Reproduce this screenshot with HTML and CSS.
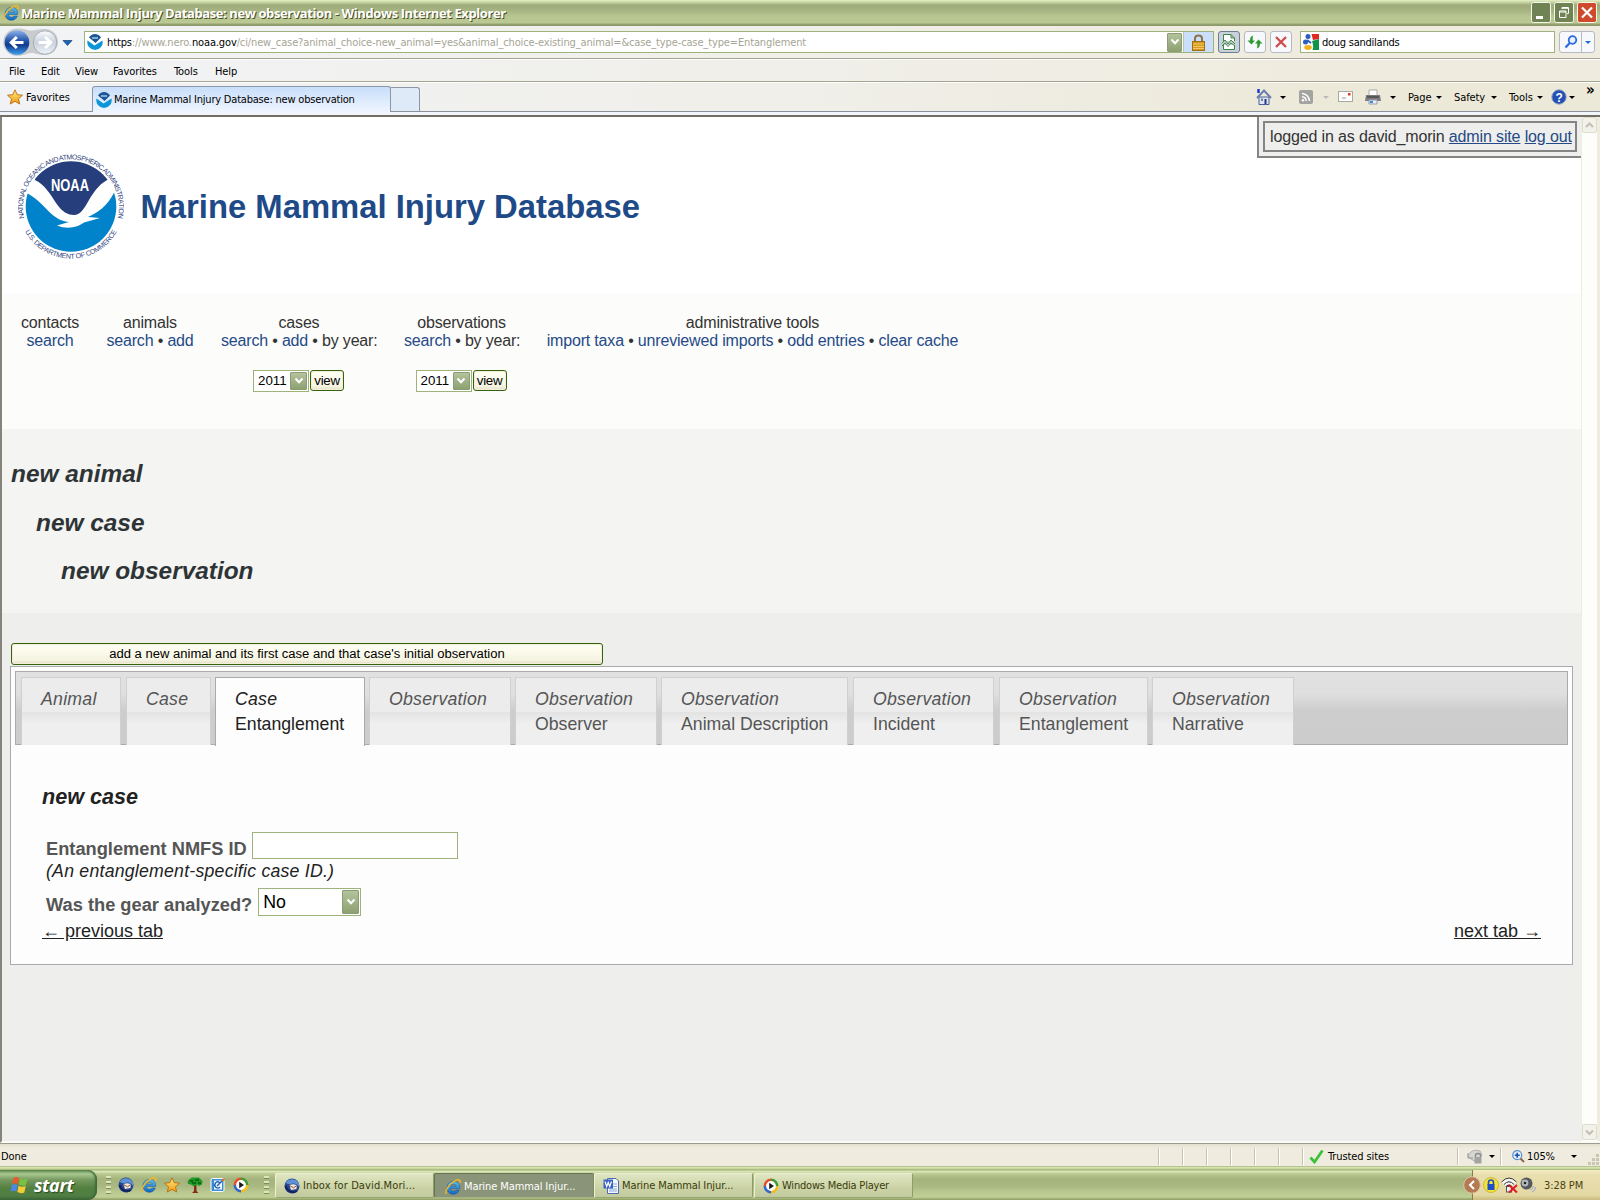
FILE: index.html
```html
<!DOCTYPE html>
<html lang="en">
<head>
<meta charset="utf-8">
<title>Marine Mammal Injury Database: new observation</title>
<link rel="stylesheet" href="styles.css">
</head>
<body>
<svg class="defs" width="0" height="0">
  <defs>
    <linearGradient id="gBlue" x1="0" y1="0" x2="0" y2="1"><stop offset="0" stop-color="#8fb4ea"/><stop offset=".45" stop-color="#1f50a8"/><stop offset=".6" stop-color="#123a8c"/><stop offset="1" stop-color="#3fa0ee"/></linearGradient>
    <linearGradient id="gGrey" x1="0" y1="0" x2="0" y2="1"><stop offset="0" stop-color="#fbfcfe"/><stop offset=".5" stop-color="#c9d1dc"/><stop offset="1" stop-color="#eef3f8"/></linearGradient>
    <linearGradient id="gStar" x1="0" y1="0" x2="0" y2="1"><stop offset="0" stop-color="#ffee80"/><stop offset="1" stop-color="#f09a10"/></linearGradient>
    <linearGradient id="gIe" x1="0" y1="0" x2="0" y2="1"><stop offset="0" stop-color="#5cc3f6"/><stop offset="1" stop-color="#1267c4"/></linearGradient>
    <symbol id="ie" viewBox="0 0 16 16">
      <path d="M14.600 9.400H5.400C5.600 11.200 6.800 12.200 8.600 12.200c1.200 0 2-.4 2.500-1.200h3.200C13.500 13.700 11.400 15.200 8.500 15.200 4.600 15.200 2 12.600 2 8.900s2.600-6.400 6.500-6.400c4 0 6.500 2.700 6.100 6.900zM11.300 7.200C11 5.900 10 5.100 8.400 5.100S5.700 5.900 5.400 7.200z" fill="url(#gIe)" stroke="#0c4c9c" stroke-width=".5"/>
      <path d="M1.400 15C-.8 12.500 4 5.500 9.500 2.200 13.500-.2 16 .8 14.900 4" fill="none" stroke="#f2b724" stroke-width="1.500"/>
    </symbol>
    <symbol id="noaa-mini" viewBox="0 0 16 16">
      <path d="M2 3.500A7 7 0 0 1 14 3.500L8.600 9Z" fill="#1a5797"/>
      <path d="M.5 6.500 7.500 11.500 15.500 6.500A7.700 7.700 0 1 1 .5 6.500Z" fill="#0c96d8"/>
      <path d="M5 4h6" stroke="#cfe2f4" stroke-width="1.200"/>
    </symbol>
    <symbol id="star" viewBox="0 0 16 16"><path d="M8 .8 10.200 5.700 15.500 6.200 11.500 9.800 12.700 15 8 12.300 3.300 15 4.500 9.800.5 6.200 5.800 5.700Z" fill="url(#gStar)" stroke="#b86b10" stroke-width=".9"/></symbol>
    <symbol id="bird" viewBox="0 0 16 16">
      <circle cx="8" cy="8" r="7.500" fill="#27478e"/><path d="M1.500 5C4 .5 10 0 13.500 3.500 15 5 15.500 7 15 9 13.500 5.500 9 4.500 6 6.500Z" fill="#5f92d4"/>
      <path d="M5.500 7.200Q9 5.500 12.800 7.200L12.500 11 7 12Z" fill="#f1e8da"/><path d="M5.500 7.500 9.500 9.800 12.800 7.500" fill="none" stroke="#8b5a48"/><path d="M1.500 8C3.500 14 9 15.500 13 13" fill="none" stroke="#15235c" stroke-width="2"/>
    </symbol>
    <symbol id="wmp" viewBox="0 0 16 16">
      <circle cx="8" cy="8" r="6.200" fill="#fff"/>
      <g fill="none" stroke-width="2.600"><path d="M8 1.800A6.200 6.200 0 0 0 1.800 8" stroke="#e8502c"/><path d="M8 1.800A6.200 6.200 0 0 1 14.200 8" stroke="#3a9e34"/><path d="M14.200 8A6.200 6.200 0 0 1 8 14.200" stroke="#f2bc1e"/><path d="M1.800 8A6.200 6.200 0 0 0 8 14.200" stroke="#3468cc"/></g>
      <path d="M6.200 4.800 11 8 6.200 11.200Z" fill="#1a1a1a"/>
    </symbol>
    <symbol id="chev" viewBox="0 0 10 8"><path d="M1.500 1.500 5 5.200 8.500 1.500" fill="none" stroke="#fff" stroke-width="2"/></symbol>
  </defs>
</svg>

<div class="window">
  <div class="titlebar">
    <svg class="ic16" viewBox="0 0 16 16"><use href="#ie"/></svg>
    <span class="titletext">Marine Mammal Injury Database: new observation - Windows Internet Explorer</span>
    <div class="winbtns">
      <svg width="20" height="21"><rect x=".5" y=".5" width="19" height="20" rx="2" fill="#6f8355" stroke="#f6f8ea"/><rect x="5" y="14" width="7" height="3" fill="#fff"/></svg>
      <svg width="20" height="21"><rect x=".5" y=".5" width="19" height="20" rx="2" fill="#6f8355" stroke="#f6f8ea"/><path d="M8 7V5.500H14.500V11.500H13M5.500 9H12V15.500H5.500ZM5.500 10H12M8 6.300H14" fill="none" stroke="#fff"/></svg>
      <svg width="20" height="21"><rect x=".5" y=".5" width="19" height="20" rx="2" fill="#cf4a2c" stroke="#f6f8ea"/><path d="M5 5.500 15 15.500M15 5.500 5 15.500" stroke="#fff" stroke-width="2.200"/></svg>
    </div>
  </div>

  <div class="navrow">
    <svg class="backfwd" width="75" height="30" viewBox="0 0 75 30">
      <path d="M17 1.500C24 1 27 3.500 31 3.500S38 2 45 2A13 13 0 0 1 45 28C38 28 35 26 31 26S24 29 17 29A13.500 13.500 0 0 1 17 1.500Z" fill="#c9cbcd"/>
      <circle cx="17" cy="15.500" r="12.300" fill="url(#gBlue)"/><circle cx="45" cy="15.500" r="11.700" fill="url(#gGrey)" stroke="#9aa3ae" stroke-width=".8"/>
      <path d="M23.500 15.500H12M16.800 10 11.200 15.500 16.800 21" fill="none" stroke="#fff" stroke-width="3"/>
      <path d="M38.500 15.500H50M45.200 10 50.800 15.500 45.200 21" fill="none" stroke="#fff" stroke-width="3"/>
      <path d="M63 13.500H72L67.500 18.500Z" fill="#1a66b4" stroke="#123c78" stroke-width=".7"/>
    </svg>
    <div class="address">
      <svg class="ic16" viewBox="0 0 16 16"><use href="#noaa-mini"/></svg>
      <span class="url"><b>https</b>://www.nero.<b>noaa.gov</b>/ci/new_case?animal_choice-new_animal=yes&amp;animal_choice-existing_animal=&amp;case_type-case_type=Entanglement</span>
      <span class="dd addr-dd"><svg width="10" height="8"><use href="#chev"/></svg></span>
      <span class="lockbox"><svg width="15" height="17" viewBox="0 0 15 17"><path d="M4 8V4.500Q4 1.500 7.500 1.500T11 4.500V8" fill="none" stroke="#8a744e" stroke-width="2"/><rect x="1.500" y="7.500" width="12" height="9" fill="#d69a22" stroke="#a06f14"/><path d="M2 10H13M2 12.500H13M2 14.500H13" stroke="#f1c863"/></svg></span>
    </div>
    <div class="navbtn pressed"><svg width="16" height="18" viewBox="0 0 16 18"><path d="M2.500 8V1.500H10L13.500 5V8M2.500 12V16.500H13.500V12M10 1.500V5H13.500" fill="#fff" stroke="#3c8a42"/><path d="M1 10.500 4 7 7 11 10 7 14 11M1 13 4 10 7 13.500 10 10 14 13" fill="none" stroke="#3c8a42"/></svg></div>
    <div class="navbtn"><svg width="16" height="16" viewBox="0 0 16 16"><path d="M6 1.500Q2.800 2.500 3 6.500H.5L4.500 10.500 8 6.500H5.800Q5.500 3.500 6 1.500Z" fill="#2f9a2f"/><path d="M10 14.500Q13.200 13.500 13 9.500H15.500L11.500 5.500 8 9.500H10.200Q10.500 12.500 10 14.500Z" fill="#2f9a2f"/></svg></div>
    <div class="navbtn"><svg width="14" height="14"><path d="M2 2 12 12M12 2 2 12" stroke="#cf4c4c" stroke-width="2.300"/></svg></div>
    <div class="search">
      <svg width="16" height="16"><rect width="16" height="16" fill="#fff"/><circle cx="5" cy="2.500" r="2.500" fill="#2b5fbe"/><circle cx="2.500" cy="8" r="2.500" fill="#2b5fbe"/><path d="M4 6 8 9" stroke="#2b5fbe" stroke-width="2"/><path d="M8.500 0H16V5L10 6Z" fill="#e02a20"/><path d="M9 7 16 5V16H9.500Q11 12 9 7Z" fill="#109448"/><ellipse cx="5" cy="13.500" rx="3.800" ry="2.400" fill="#f2b31c"/></svg>
      <span class="searchtext">doug sandilands</span>
    </div>
    <div class="go"><span><svg width="14" height="14" viewBox="0 0 14 14"><circle cx="8.500" cy="5" r="3.800" fill="#e8f1ff" stroke="#2a6ae0" stroke-width="1.800"/><path d="M5.700 8 1.500 12.500" stroke="#2a6ae0" stroke-width="2.200"/></svg></span><span><i class="arr blue"></i></span></div>
  </div>

  <div class="menurow"><span>File</span><span>Edit</span><span>View</span><span>Favorites</span><span>Tools</span><span>Help</span></div>

  <div class="tabrow">
    <div class="fav"><svg class="ic16" viewBox="0 0 16 16"><use href="#star"/></svg><span>Favorites</span></div>
    <div class="browsertab"><svg class="ic16" viewBox="0 0 16 16"><use href="#noaa-mini"/></svg><span>Marine Mammal Injury Database: new observation</span></div>
    <div class="newtab"></div>
    <div class="cmdbar">
      <svg class="c-home" width="16" height="16"><path d="M3 8H13V15.500H3Z" fill="#dfe6f4" stroke="#4a5f94"/><path d="M1 9 8 1.500 15 9" fill="none" stroke="#6b7fae" stroke-width="2"/><path d="M2.500 0V4" stroke="#2438c8" stroke-width="2.500"/><path d="M9.500 10V15" stroke="#23367c" stroke-width="2"/><path d="M5 9.500H7V12H5Z" fill="#6f7f9a"/></svg>
      <i class="arr a1"></i>
      <svg class="c-rss" width="14" height="14"><rect width="14" height="14" rx="2" fill="#a3a3a0"/><g fill="none" stroke="#fff" stroke-width="1.500"><path d="M3 3.500A8 8 0 0 1 10.500 11M3 6.800A4.500 4.500 0 0 1 7.200 11"/></g><circle cx="4" cy="10.300" r="1.200" fill="#fff"/></svg>
      <i class="arr a2"></i>
      <svg class="c-mail" width="15" height="12"><rect x=".5" y=".5" width="14" height="10" fill="#fcfcfa" stroke="#a9a9a4"/><path d="M10 2H12.500V4.500H10Z" fill="#d83a2c"/><path d="M4 7H8" stroke="#999"/></svg>
      <svg class="c-print" width="16" height="16"><path d="M4 6V1H12V6" fill="#fff" stroke="#aaa"/><path d="M1 6H15L16 12H0Z" fill="#7c7c7e"/><path d="M2 8H14" stroke="#333"/><path d="M4 11H12V15H4Z" fill="#eef" stroke="#99a"/><path d="M5 13H8" stroke="#3090d0" stroke-width="2"/></svg>
      <i class="arr a3"></i>
      <span class="w-page">Page</span><i class="arr a4"></i>
      <span class="w-safety">Safety</span><i class="arr a5"></i>
      <span class="w-tools">Tools</span><i class="arr a6"></i>
      <svg class="c-help" width="16" height="16"><circle cx="8" cy="8" r="7.200" fill="#2450b4" stroke="#8fa3c8"/><text x="8" y="12.500" class="helpq">?</text></svg>
      <i class="arr a7"></i><span class="more">»</span>
    </div>
  </div>
  <div class="tabline"></div>

  <div class="view">
    <div class="page">
      <div class="login"><div>logged in as david_morin <a>admin site</a> <a>log out</a></div></div>
      <header class="banner">
        <svg class="seal" width="106" height="106" viewBox="0 0 106 106">
          <defs>
            <path id="ringTop" d="M7.600 70A48 48 0 1 1 98.400 70"/>
            <path id="ringBot" d="M4.500 73A52.300 52.300 0 0 0 101.500 73"/>
            <clipPath id="disc"><circle cx="53" cy="53.500" r="45.300"/></clipPath>
          </defs>
          <g clip-path="url(#disc)">
            <rect width="106" height="106" fill="#fff"/>
            <path d="M17 27C27 32 33 42 38 50 44 59 50 62 56 62S66 56 71 47C77 37 83 29 92 26V0H17Z" fill="#263f7c"/>
            <path d="M7 39C18 44 27 55 33 60.500 39 66 45 68.500 51 69L39 72.500C50 77 60 74 66 69.500L82 65 70 64C84 58 93 48 97.500 36L106 40V106H0V38Z" fill="#0083ca"/>
          </g>
          <text x="33" y="38" class="sealname" textLength="38" lengthAdjust="spacingAndGlyphs">NOAA</text>
          <text class="ring"><textPath href="#ringTop" startOffset="50%" textLength="172" lengthAdjust="spacing">NATIONAL OCEANIC AND ATMOSPHERIC ADMINISTRATION</textPath></text>
          <text class="ring"><textPath href="#ringBot" startOffset="50%" textLength="112" lengthAdjust="spacing">U.S. DEPARTMENT OF COMMERCE</textPath></text>
        </svg>
        <h1>Marine Mammal Injury Database</h1>
      </header>

      <nav class="sitenav">
        <div class="k1">contacts<br><a>search</a></div>
        <div class="k2">animals<br><a>search</a> • <a>add</a></div>
        <div class="k3">cases<br><a>search</a> • <a>add</a> • by year:
          <div class="yr"><span class="sel">2011<span class="dd"><svg width="10" height="8"><use href="#chev"/></svg></span></span><span class="btn">view</span></div></div>
        <div class="k4">observations<br><a>search</a> • by year:
          <div class="yr"><span class="sel">2011<span class="dd"><svg width="10" height="8"><use href="#chev"/></svg></span></span><span class="btn">view</span></div></div>
        <div class="k5">administrative tools<br><a>import taxa</a> • <a>unreviewed imports</a> • <a>odd entries</a> • <a>clear cache</a></div>
      </nav>

      <section class="crumbs"><h2>new animal</h2><h2 class="in1">new case</h2><h2 class="in2">new observation</h2></section>

      <main>
        <div class="btn submit">add a new animal and its first case and that case's initial observation</div>
        <div class="panel">
          <div class="tabs">
            <div class="tab t1"><i>Animal</i></div>
            <div class="tab t2"><i>Case</i></div>
            <div class="tab t3 on"><i>Case</i><br>Entanglement</div>
            <div class="tab t4"><i>Observation</i></div>
            <div class="tab t5"><i>Observation</i><br>Observer</div>
            <div class="tab t6"><i>Observation</i><br>Animal Description</div>
            <div class="tab t7"><i>Observation</i><br>Incident</div>
            <div class="tab t8"><i>Observation</i><br>Entanglement</div>
            <div class="tab t9"><i>Observation</i><br>Narrative</div>
          </div>
          <h3>new case</h3>
          <div class="field f1"><b>Entanglement NMFS ID</b><span class="input"></span></div>
          <div class="hint">(An entanglement-specific case ID.)</div>
          <div class="field f2"><b>Was the gear analyzed?</b><span class="sel big">No<span class="dd"><svg width="10" height="8"><use href="#chev"/></svg></span></span></div>
          <div class="pager"><a>← previous tab</a><a>next tab →</a></div>
        </div>
      </main>
    </div>
    <div class="scroll">
      <svg width="16" height="17"><rect x=".5" y=".5" width="14" height="15" rx="1.500" fill="#f3f2ea" stroke="#dedccb"/><path d="M4 10 7.500 6.500 11 10" fill="none" stroke="#c2c0b2" stroke-width="2"/></svg>
      <svg width="16" height="17"><rect x=".5" y=".5" width="14" height="15" rx="1.500" fill="#f3f2ea" stroke="#dedccb"/><path d="M4 6.500 7.500 10 11 6.500" fill="none" stroke="#c2c0b2" stroke-width="2"/></svg>
    </div>
  </div>

  <div class="status">
    <span class="done">Done</span>
    <span class="cell"></span><span class="cell"></span><span class="cell"></span><span class="cell"></span><span class="cell"></span><span class="cell"></span>
    <span class="cell trust"><svg width="15" height="15"><path d="M1.500 8.500 5.500 13 13.500 1.500" fill="none" stroke="#3cc23a" stroke-width="2.800"/></svg>Trusted sites</span>
    <span class="cell prot"><svg width="16" height="15"><path d="M1 8C2 2 8 0 13 2L15 6 9 13Z" fill="#d5d5d2" stroke="#b0b0ac"/><path d="M1 4V9H6" fill="none" stroke="#999"/><path d="M8.500 8V6.500Q8.500 4.500 11 4.500T13.500 6.500V8" fill="none" stroke="#888" stroke-width="1.300"/><rect x="7.500" y="8" width="7" height="6.500" fill="#a3a3a0"/></svg><i class="arr"></i></span>
    <span class="cell zoomc"><svg width="13" height="13"><circle cx="5.200" cy="5.200" r="4.500" fill="#e6f0fc" stroke="#5b8ed0" stroke-width="1.200"/><path d="M2.700 5.200H7.700M5.200 2.700V7.700" stroke="#1e4fa8" stroke-width="1.600"/><path d="M8.500 8.500 12 12" stroke="#8a6848" stroke-width="2"/></svg><span>105%</span><i class="arr"></i></span>
    <svg class="grip" width="12" height="12"><path d="M8 0H11V3H8ZM4 4H7V7H4ZM8 4H11V7H8ZM0 8H3V11H0ZM4 8H7V11H4ZM8 8H11V11H8Z" fill="#c9c6b2"/></svg>
  </div>

  <div class="taskbar">
    <div class="start"><svg width="19" height="18" viewBox="0 0 19 18"><path d="M3.500 2Q6.500 0 9 2L7.800 8Q5.200 6.500 2 8Z" fill="#e85a2a"/><path d="M10 2.500Q13 4.500 17.500 2.500L16 9Q12.500 10.500 8.800 8.500Z" fill="#7cc040"/><path d="M1.800 9Q5 7.500 7.600 9.200L6.300 15.500Q3.500 14 .5 15.500Z" fill="#4a88e8"/><path d="M8.600 9.700Q12 11.500 15.800 10L14.300 16.500Q11 18 7.300 16Z" fill="#f6cc34"/></svg><em>start</em></div>
    <span class="tgrip g1"></span>
    <div class="quick">
      <svg class="ic16" viewBox="0 0 16 16"><use href="#bird"/></svg>
      <svg class="ic16" viewBox="0 0 16 16"><use href="#ie"/></svg>
      <svg class="ic16" viewBox="0 0 16 16"><use href="#star"/></svg>
      <svg class="ic16" viewBox="0 0 16 16"><path d="M7 8H9.500V14L11.500 16H5L7 14Z" fill="#8a2a1c"/><path d="M2 2.500 5 .5 12 .5 15.500 4 15 7.500 12 9 10 7.500 7 9.500 4 7.500 1 7 .5 4.500Z" fill="#1c9a24"/><path d="M3 4H6M8 3H12M5 6H9M11 6H14" stroke="#053c08"/></svg>
      <svg class="ic16" viewBox="0 0 16 16"><rect x="1" y="1.500" width="13" height="13" rx="1.500" fill="#3a8cd8" stroke="#fff"/><path d="M4 3.500H12V12.500H4Z" fill="#eef6ff"/><path d="M9.500 5.500A3 3 0 1 0 10 10M7 9 13 3" fill="none" stroke="#1c62b0" stroke-width="1.400"/><path d="M12 4 14.500 2" stroke="#e07030" stroke-width="2"/></svg>
      <svg class="ic16" viewBox="0 0 16 16"><use href="#wmp"/></svg>
    </div>
    <span class="tgrip g2"></span>
    <div class="task k-a"><svg class="ic16" viewBox="0 0 16 16"><use href="#bird"/></svg><span>Inbox for David.Mori...</span></div>
    <div class="task k-b active"><svg class="ic16" viewBox="0 0 16 16"><use href="#ie"/></svg><span>Marine Mammal Injur...</span></div>
    <div class="task k-c"><svg class="ic16" viewBox="0 0 16 16"><path d="M4.500.5H13L15.500 3V15.500H4.500Z" fill="#f4f8ff" stroke="#4c6cb4"/><path d="M10 6H14M10 8.500H14M6 11H14M6 13H14" stroke="#8aa4d8"/><rect x=".5" y="1.500" width="9.500" height="9" fill="#3a62c0"/><path d="M2 3.500 3.700 8.500 5.200 4.500 6.700 8.500 8.500 3.500" fill="none" stroke="#fff" stroke-width="1.200"/></svg><span>Marine Mammal Injur...</span></div>
    <div class="task k-d"><svg class="ic16" viewBox="0 0 16 16"><use href="#wmp"/></svg><span>Windows Media Player</span></div>
    <div class="tray">
      <svg class="hide" width="18" height="18"><circle cx="9" cy="9" r="8.300" fill="#b37a54" stroke="#dfc3a2"/><path d="M11 5 7 9 11 13" fill="none" stroke="#fff" stroke-width="2"/></svg>
      <svg width="16" height="16"><circle cx="8" cy="8" r="7.500" fill="#f7e338" stroke="#c8b83a"/><path d="M5.500 8V5.500Q5.500 3 8 3T10.500 5.500V8" fill="none" stroke="#1c50c8" stroke-width="1.600"/><rect x="4.500" y="7" width="7" height="6" fill="#1c50c8"/></svg>
      <svg width="17" height="16"><path d="M.5 5Q8-3 15.500 5L8 13Z" fill="#f4f4f0"/><g fill="none" stroke="#333"><path d="M.5 5Q8-3 15.500 5M3 7.500Q8 2 13 7.500"/><path d="M5 10Q8 6.500 11 10" stroke-width="1.500"/></g><rect x="5.500" y="9.500" width="5" height="5.500" fill="#eee" stroke="#555"/><path d="M8 8 16 15.500M16 8 8 15.500" stroke="#e01c24" stroke-width="2"/></svg>
      <svg width="16" height="16"><circle cx="6.500" cy="6.500" r="6" fill="#55585c"/><circle cx="5" cy="6" r="3.400" fill="#b4b8bc"/><circle cx="5" cy="6" r="1.300" fill="#222"/><path d="M10 13Q13 12 13.500 9M12 15Q15.500 14 15.500 10" fill="none" stroke="#9aa0d8"/></svg>
      <span class="clock">3:28 PM</span>
    </div>
  </div>
</div>
</body>
</html>
```
FILE: styles.css
```css
* { box-sizing: border-box; }
body { margin: 0; width: 1600px; height: 1200px; overflow: hidden; font-family: "DejaVu Sans Condensed", "DejaVu Sans", sans-serif; font-size: 11px; font-stretch: condensed; color: #000; letter-spacing: -0.1px; }
.defs { display: block; }
svg { display: block; flex: none; }
.ic16 { width: 16px; height: 16px; }
.window { display: flex; flex-direction: column; width: 1600px; height: 1200px; background: #efecdf; }

.titlebar { height: 26px; flex: none; display: flex; align-items: center; padding: 0 3px 1px 3px; background: linear-gradient(#e6efc8 0, #cad8a4 2px, #a0ab7c 5px, #a3b07f 9px, #b9c793 17px, #bac893 23px, #97a374 24px, #8a9668 26px); }
.titletext { font: bold 13px "Open Sans", sans-serif; color: #fff; margin-left: 2px; letter-spacing: -0.4px; text-shadow: 1px 1px 0 #4c4f22; white-space: nowrap; }
.winbtns { margin-left: auto; display: flex; gap: 3px; }

.navrow { height: 33px; flex: none; display: flex; align-items: center; border-bottom: 1px solid #a5a491; background: linear-gradient(90deg, #f2f3f6, #f0efe9 50%, #efecdf 80%); }
.backfwd { width: 75px; margin-left: 0; }
.address { width: 1130px; height: 22px; margin-left: 9px; border: 1px solid #9eb27c; background: #fff; display: flex; align-items: center; padding-left: 2px; }
.url { margin: 1px 0 0 4px; color: #a6a595; white-space: nowrap; letter-spacing: -0.13px; }
.url b { font-weight: normal; color: #000; }
.dd { background: linear-gradient(#b3c39c, #8da172); border: 1px solid #8b9c74; border-radius: 1px; display: flex; align-items: center; justify-content: center; }
.addr-dd { width: 15px; height: 19px; margin-left: auto; }
.lockbox { width: 30px; height: 20px; margin-left: 1px; background: #cbdffc; border-left: 1px solid #b7c9a0; display: flex; align-items: center; justify-content: center; }
.navbtn { width: 22px; height: 22px; margin-left: 4px; border: 1px solid #b5b9c2; border-radius: 3px; background: #f7f8fb; display: flex; align-items: center; justify-content: center; }
.navbtn.pressed { background: #c9d2dc; border-color: #6d7d92; }
.search { width: 255px; height: 22px; margin-left: 8px; border: 1px solid #9eb27c; background: #fff; display: flex; align-items: center; padding-left: 2px; }
.searchtext { margin: 1px 0 0 3px; letter-spacing: -0.25px; }
.go { display: flex; margin-left: 4px; width: 36px; height: 22px; border: 1px solid #b5b9c2; border-radius: 3px; background: #f7f8fb; }
.go span { display: flex; align-items: center; justify-content: center; width: 21px; }
.go span + span { width: 13px; border-left: 1px solid #b5b9c2; }
.arr { flex: none; width: 0; height: 0; border: 3px solid transparent; border-top-color: #000; border-bottom: 0; }
.arr.blue { border-top-color: #1f6ad8; }

.menurow { height: 23px; flex: none; display: flex; align-items: center; border-top: 1px solid #fff; border-bottom: 1px solid #a5a491; background: linear-gradient(90deg, #f2f3f6, #f0efe9 50%, #efecdf 80%); padding: 1px 0 0 9px; }
.menurow span:nth-child(1) { width: 32px; }
.menurow span:nth-child(2) { width: 34px; }
.menurow span:nth-child(3) { width: 38px; }
.menurow span:nth-child(4) { width: 61px; }
.menurow span:nth-child(5) { width: 41px; }

.tabrow { height: 30px; flex: none; display: flex; align-items: flex-end; border-top: 1px solid #fff; border-bottom: 1px solid #8b919a; background: linear-gradient(90deg, #f1f2f5, #f0efe9 50%, #ece9d8 85%); }
.fav { width: 92px; height: 28px; display: flex; align-items: center; padding-left: 7px; gap: 3px; }
.browsertab { width: 299px; height: 26px; margin-bottom: -1px; border: 1px solid #8b96a8; border-bottom: 0; border-radius: 3px 3px 0 0; background: linear-gradient(#c8defa, #eff5fe); display: flex; align-items: center; padding-left: 3px; gap: 2px; white-space: nowrap; letter-spacing: -0.2px; }
.newtab { width: 29px; height: 24px; border: 1px solid #8b96a8; border-left: 0; border-bottom: 0; border-radius: 0 3px 0 0; background: #dfeaf9; }
.cmdbar { flex: 1; height: 28px; display: flex; align-items: center; }
.c-home { margin-left: 836px; }
.a1 { margin-left: 8px; }
.c-rss { margin-left: 13px; }
.arr.a2 { margin-left: 10px; border-top-color: #bbb; }
.c-mail { margin-left: 9px; }
.c-print { margin-left: 12px; }
.a3 { margin-left: 9px; }
.w-page { margin-left: 12px; width: 28px; }
.w-safety { margin-left: 12px; width: 37px; }
.w-tools { margin-left: 12px; width: 28px; }
.c-help { margin-left: 8px; }
.a7 { margin-left: 2px; }
.helpq { font: bold 12px "Liberation Sans", sans-serif; fill: #fff; text-anchor: middle; }
.more { margin: -15px 0 0 11px; font-size: 15px; font-weight: bold; }
.tabline { height: 5px; flex: none; background: #f1f4fa; border-bottom: 2px solid #716f64; }

.view { height: 1026px; flex: none; display: flex; border-left: 2px solid #85837a; border-bottom: 2px solid #fbfaf4; }
.page { width: 1579px; position: relative; font-family: "Liberation Sans", Arial, sans-serif; font-size: 16px; font-stretch: normal; letter-spacing: 0; color: #333; background: #eeeeec; }
.scroll { width: 16px; background: #fdfdfa; border-left: 1px solid #eeede5; display: flex; flex-direction: column; justify-content: space-between; }
a { color: #254a87; }
.login { position: absolute; right: 0; top: 0; border: 2px solid #858585; border-width: 0 0 2px 2px; background: #eeeeec; padding: 4px; }
.login div { border: 2px solid #858585; width: 314px; height: 31px; line-height: 27px; padding-left: 5px; white-space: nowrap; letter-spacing: -0.14px; }
.login a { text-decoration: underline; }
.banner { height: 177px; background: #fff; display: flex; align-items: center; padding-left: 16px; }
.banner h1 { margin: 2px 0 0 16.500px; font-size: 32.8px; line-height: 40px; color: #204a87; white-space: nowrap; }
.sealname { font: bold 16px "Liberation Sans", sans-serif; fill: #fff; letter-spacing: 0; }
.ring { font: 7px "Liberation Sans", sans-serif; fill: #30457e; text-anchor: middle; letter-spacing: 0; }

.sitenav { height: 135px; background: #fcfcfa; display: flex; gap: 27px; padding: 20px 0 0 19px; line-height: 18px; text-align: center; white-space: nowrap; letter-spacing: -0.18px; }
.k1 { width: 58px; } .k2 { width: 88px; } .k3 { width: 156px; } .k4 { width: 115px; } .k5 { width: 413px; }
.yr { display: flex; justify-content: center; gap: 1px; margin: 20px 0 0 -1px; letter-spacing: 0; }
.sel { width: 56px; height: 22px; border: 1px solid #9eb27c; background: #fff; display: flex; align-items: center; justify-content: space-between; padding: 1px 1px 1px 4px; font-size: 13.3px; color: #000; }
.sel .dd { width: 17px; height: 100%; }
.btn { border: 1px solid #37620d; border-radius: 3px; background: linear-gradient(#fffff4, #f6f4e2 80%, #e3dfc5); box-shadow: inset 0 0 0 1px #f2efd8; color: #000; font-size: 13.3px; text-align: center; }
.yr .btn { width: 34px; height: 21px; line-height: 19px; letter-spacing: -0.3px; }

.crumbs { height: 184px; background: #f4f4f2; padding: 31px 0 0 9px; color: #2e3436; }
.crumbs h2 { margin: 0 0 20.500px; font-size: 24.4px; line-height: 28px; font-style: italic; }
.crumbs .in1 { margin-left: 25px; }
.crumbs .in2 { margin-left: 50px; }

main { padding: 30px 0 0 8px; }
.submit { width: 592px; height: 22px; line-height: 20px; margin-left: 1px; font-size: 13.05px; }
.panel { width: 1563px; height: 299px; margin-top: 1px; border: 1px solid #aaa; background: #fdfdfd; padding: 4px; }
.tabs { height: 74px; border: 1px solid #aaa; background: linear-gradient(#e1e1e1, #dfdfdf 30%, #cdcdcd 54%, #cccccc); display: flex; padding-left: 5px; font-size: 17.7px; line-height: 25px; white-space: nowrap; }
.tab { height: 68px; margin: 5px 5px -1px 0; padding: 9px 0 0 19px; border: 1px solid #d0d0d0; border-bottom: 0; background: linear-gradient(#ececec 50%, #e2e2e2 50%, #efefef 68%); color: #555; flex: none; }
.tab i { letter-spacing: 0.25px; }
.tab.on { background: #fdfdfd; height: 69px; margin-bottom: -2px; border-color: #aaa; color: #212121; }
.t1 { width: 100px; } .t2 { width: 85px; margin-right: 4px; } .t3 { width: 150px; margin-right: 4px; } .t4 { width: 142px; margin-right: 4px; } .t5 { width: 142px; margin-right: 4px; } .t6 { width: 187px; } .t7 { width: 141px; } .t8 { width: 149px; margin-right: 4px; } .t9 { width: 142px; }
.panel h3 { margin: 39px 0 0 27px; font-size: 21.6px; line-height: 26px; font-style: italic; color: #222; }
.field { display: flex; margin-left: 31px; font-size: 18.25px; color: #555; white-space: nowrap; }
.f1 { margin-top: 22px; height: 27px; }
.field b { line-height: 34px; margin-right: 5px; }
.input { width: 206px; height: 27px; border: 1px solid #9eb27c; background: #fff; }
.hint { margin-left: 31px; font-style: italic; font-size: 17.7px; letter-spacing: 0.23px; line-height: 24px; color: #222; }
.f2 { margin-top: 5px; height: 28px; }
.f2 b { margin-right: 6px; }
.sel.big { width: 103px; height: 28px; font-size: 17.8px; }
.sel.big .dd { width: 17px; }
.pager { display: flex; justify-content: space-between; margin: 4px 27px 0 27px; font-size: 18px; line-height: 22px; }
.pager a { color: #222; text-decoration: underline; }

.status { height: 23px; flex: none; display: flex; align-items: center; padding-top: 2px; border-top: 1px solid #9c9b90; background: linear-gradient(#e2dfcf, #efecdf 4px, #efecdf); }
.done { width: 1158px; padding-left: 1px; }
.cell { width: 24px; height: 17px; border-left: 1px solid #c5c2b0; box-shadow: inset 1px 0 0 #fff; display: flex; align-items: center; flex: none; }
.trust { width: 155px; padding-left: 6px; gap: 4px; }
.prot { width: 43px; padding-left: 9px; gap: 6px; }
.zoomc { width: 85px; padding-left: 11px; gap: 2px; }
.zoomc .arr { margin-left: 14px; }
.grip { margin: 7px 0 0 3px; }

.taskbar { flex: 1; display: flex; align-items: flex-start; padding-top: 4px; background: linear-gradient(#8fa06c 0, #dbe8b4 1px, #c3d398 3px, #94a86c 4px, #e1ecc0 5px, #b9c890 8px, #a5b47c 13px, #a9b881 20px, #b9c88f 26px, #c0cf96 31px, #8c9c60 34px); }
.start { width: 97px; height: 30px; border-radius: 0 9px 9px 0; background: linear-gradient(#5f8a50, #a9c890 4px, #74985f 10px, #53803f 18px, #4f7e44 26px, #396234); box-shadow: inset -2px 0 2px #3c6a38; display: flex; align-items: center; padding-left: 10px; gap: 5px; }
.start em { font: italic bold 18px "Open Sans", sans-serif; color: #fff; text-shadow: 1px 1px 1px #2c4a24; letter-spacing: -0.4px; }
.tgrip { width: 5px; height: 20px; margin-top: 6px; background: repeating-linear-gradient(#dce6bd 0 2px, #7e8e58 2px 3px, transparent 3px 5px); }
.g1 { margin-left: 9px; }
.quick { display: flex; gap: 7px; margin: 7px 0 0 7px; }
.g2 { margin-left: 15px; }
.task { height: 25px; margin-top: 3px; border: 1px solid; border-color: #eaf1cf #8e9d68 #98a773 #eaf1cf; border-radius: 2px; background: linear-gradient(#dfe6c2, #cbd3a6 60%, #c1ca9e); color: #3a3b0c; display: flex; align-items: center; padding-left: 8px; gap: 3px; white-space: nowrap; letter-spacing: -0.1px; }
.task.active { background: #8a9478; border-color: #67724f #7f8a64 #a7b384 #67724f; color: #fff; padding: 2px 0 0 10px; gap: 3px; }
.k-a { width: 159px; margin-left: 6px; }
.k-a span { letter-spacing: 0.12px; }
.k-b { width: 160px; }
.k-c { width: 159px; }
.k-d { width: 159px; margin-left: 1px; letter-spacing: -0.2px; }
.tray { margin-left: auto; width: 128px; height: 30px; display: flex; align-items: center; border-left: 1px solid #8a7c46; background: linear-gradient(#f4ecc4, #e9dfae 5px, #e4d9a4 25px, #c9ba7e); gap: 2px; color: #4c4210; }
.hide { margin-left: -10px; }
.clock { margin-left: 6px; white-space: nowrap; }
```
